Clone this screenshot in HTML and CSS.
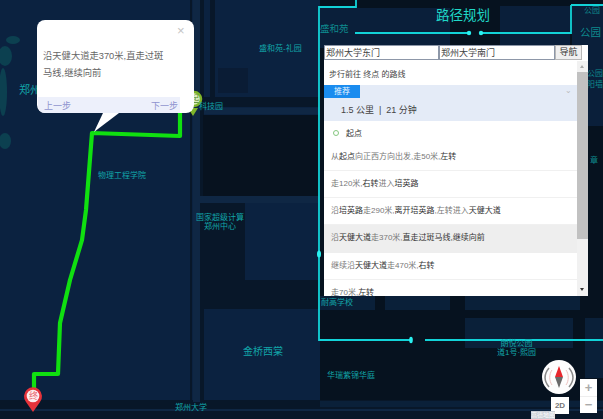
FILE: index.html
```html
<!DOCTYPE html>
<html lang="zh">
<head>
<meta charset="utf-8">
<title>路径规划</title>
<link rel="stylesheet" href="styles.css">
</head>
<body>
<main class="map">
  <svg class="map-art" width="603" height="419" viewBox="0 0 603 419" aria-hidden="true">
    <rect class="base" width="603" height="419"/>
    <g class="blob">
      <ellipse cx="13" cy="40" rx="7" ry="4"/>
      <ellipse cx="5" cy="56" rx="7" ry="10"/>
      <ellipse cx="3" cy="92" rx="4" ry="24"/>
      <ellipse cx="5" cy="141" rx="6" ry="8"/>
    </g>
    <g class="road-dark">
      <rect x="190" y="0" width="2" height="402"/>
      <rect x="200" y="0" width="4" height="402"/>
      <rect x="210" y="0" width="5" height="97"/>
      <rect x="204" y="97" width="116" height="10"/>
      <rect x="196" y="203" width="49" height="77"/>
      <rect x="200" y="280" width="120" height="29"/>
      <rect x="0" y="400" width="603" height="19"/>
    </g>
    <rect class="block-dark" x="203" y="115" width="117" height="81"/>
    <rect class="shadow" x="218" y="68" width="30" height="25"/>
    <g class="road-light">
      <rect x="193" y="0" width="7" height="402"/>
      <rect x="204" y="108" width="116" height="6"/>
      <rect x="196" y="196" width="124" height="7"/>
      <rect x="0" y="409" width="603" height="2"/>
    </g>
    <rect class="block-right" x="320" y="0" width="283" height="400"/>
    <rect class="block-top" x="320" y="8" width="130" height="40"/>
    <rect class="block-top" x="500" y="6" width="70" height="40"/>
    <rect class="block-top" x="572" y="6" width="31" height="120"/>
    <g class="block-navy">
      <rect x="320" y="296" width="55" height="14"/>
      <rect x="385" y="296" width="65" height="14"/>
      <rect x="465" y="296" width="115" height="14"/>
      <rect x="465" y="318" width="108" height="30"/>
      <rect x="585" y="318" width="18" height="60"/>
      <rect x="320" y="401" width="283" height="6"/>
    </g>
    <g class="frame">
      <path d="M571 5V33H481M468 33H355M356 0V7H319V340H411M425 340H603M571 5H603"/>
    </g>
    <g class="frame-dot">
      <circle cx="469" cy="33" r="2.200"/>
      <circle cx="481" cy="33" r="2.200"/>
      <ellipse cx="411" cy="340" rx="1.800" ry="3.200"/>
      <ellipse cx="319" cy="254" rx="2" ry="3.500"/>
    </g>
    <path class="route" d="M180 113V136L92 133L86 210L82 240L70 280L60 323L58 374H34V392"/>
    <g>
      <path class="start-tip" d="M188 108L193 116L198 108Z"/>
      <circle class="start-ring" cx="194" cy="99" r="7"/>
      <path class="end-pin" d="M33 412L26 402A9 9 0 1 1 40 402Z"/>
      <circle class="end-face" cx="33" cy="396" r="6.300"/>
    </g>
  </svg>

  <span class="label label-zz">郑州</span>
  <span class="label label-shl">盛和苑-礼园</span>
  <span class="label label-kj">科技园</span>
  <span class="label label-wl">物理工程学院</span>
  <span class="label label-gj">国家超级计算<br>郑州中心</span>
  <span class="label label-jq">金桥西棠</span>
  <span class="label label-zd">郑州大学</span>
  <span class="label label-sh">盛和苑</span>
  <span class="label label-gy1">公园</span>
  <span class="label label-gy2">公园</span>
  <span class="label label-gy3">公园<br>阳墙</span>
  <span class="label label-z">章</span>
  <span class="label label-nx">耐高学校</span>
  <span class="label label-ly">朗悦公园<br>道1号·熙园</span>
  <span class="label label-hr">华瑞紫锦华庭</span>
  <span class="start-char">起</span>
  <span class="end-char">终</span>
  <h1 class="title">路径规划</h1>

  <section class="popup">
    <span class="popup-close">×</span>
    <p class="popup-text">沿天健大道走370米,直走过斑马线,继续向前</p>
    <div class="popup-foot"><span>上一步</span><span>下一步</span></div>
    <svg class="popup-tail" width="30" height="20" viewBox="0 0 30 20" aria-hidden="true"><path d="M11 0L2 19L27 0Z"/></svg>
  </section>

  <section class="panel">
    <form class="search">
      <input class="search-input" value="郑州大学东门">
      <input class="search-input" value="郑州大学南门">
      <button class="search-btn" type="button">导航</button>
    </form>
    <div class="results">
      <div class="list">
        <p class="list-head">步行前往 终点 的路线</p>
        <div class="plan">
          <span class="badge">推荐</span>
          <span class="plan-caret">⌄</span>
          <p class="plan-info">1.5 公里 &nbsp;|&nbsp; 21 分钟</p>
        </div>
        <p class="origin"><i class="origin-dot"></i><b>起点</b></p>
        <p class="step">从<b>起点</b>向正西方向出发,走50米,<b>左转</b></p>
        <p class="step">走120米,<b>右转</b>进入<b>培英路</b></p>
        <p class="step">沿<b>培英路</b>走290米,<b>离开培英路</b>,左转进入<b>天健大道</b></p>
        <p class="step step-on">沿<b>天健大道</b>走370米,<b>直走过斑马线,继续向前</b></p>
        <p class="step">继续沿<b>天健大道</b>走470米,<b>右转</b></p>
        <p class="step step-last">走70米,<b>左转</b></p>
      </div>
      <div class="scrollbar">
        <span class="arrow-up"></span>
        <span class="thumb"></span>
        <span class="arrow-down"></span>
      </div>
    </div>
  </section>

  <div class="compass">
    <svg width="34" height="34" viewBox="0 0 34 34" aria-hidden="true">
      <circle class="compass-face" cx="17" cy="17" r="17"/>
      <path class="compass-arc" d="M7 8C2 14 2 21 7 27M27 8C32 14 32 21 27 27"/>
      <path class="compass-arc-red" d="M10 10C7 14 7 21 10 25M24 10C27 14 27 21 24 25"/>
      <path class="compass-n" d="M17 6L13 17H21Z"/>
      <path class="compass-s" d="M17 28L13 17H21Z"/>
    </svg>
  </div>
  <span class="mode">2D</span>
  <div class="zoom"><span>+</span><span>−</span></div>
  <span class="logo">高德地图</span>
</main>
</body>
</html>
```
FILE: styles.css
```css
* { box-sizing: border-box; }
html, body { margin: 0; padding: 0; }
body { width: 603px; height: 419px; overflow: hidden; background: #0b2240; font-family: "Liberation Sans", "Noto Sans CJK SC", sans-serif; }
p, h1 { margin: 0; font-weight: normal; }

.map { position: relative; width: 603px; height: 419px; overflow: hidden; }
.map-art { position: absolute; left: 0; top: 0; display: block; filter: blur(.5px); }
.base { fill: #0b2240; }
.blob { fill: #0c4050; }
.road-dark { fill: #081729; }
.road-light { fill: #0f2744; }
.block-dark { fill: #07121f; }
.shadow { fill: #0a1c35; }
.block-right { fill: #06121f; }
.block-top { fill: #0a1f3a; }
.block-navy { fill: #0a2039; }
.frame path { fill: none; stroke: #12d3d8; stroke-width: 1.800; }
.frame-dot { fill: #2af0f0; }
.route { fill: none; stroke: #10e010; stroke-width: 4.200; stroke-linejoin: round; }
.start-ring { fill: #dcebbd; stroke: #7fb52a; stroke-width: 2.500; }
.start-tip { fill: #7fb52a; }
.start-char { position: absolute; left: 190px; top: 94px; font-size: 9px; line-height: 10px; color: #4e8a2a; }
.end-pin { fill: #e6333a; }
.end-face { fill: #fdeeee; }
.end-char { position: absolute; left: 29px; top: 391px; font-size: 9px; line-height: 10px; color: #e8606a; }

.label { position: absolute; font-size: 8px; line-height: 9px; color: #12a5a8; white-space: nowrap; text-align: center; }
.label-zz { left: 19px; top: 84px; font-size: 11px; line-height: 12px; }
.label-shl { left: 259px; top: 44px; }
.label-kj { left: 199px; top: 102px; }
.label-wl { left: 98px; top: 171px; }
.label-gj { left: 196px; top: 213px; }
.label-jq { left: 243px; top: 346px; font-size: 10px; line-height: 12px; }
.label-zd { left: 175px; top: 403px; }
.label-sh { left: 320px; top: 23px; font-size: 9.500px; line-height: 11px; color: #0e8a8e; }
.label-gy1 { left: 584px; top: 6px; color: #0e8a8e; }
.label-gy2 { left: 580px; top: 26px; font-size: 10.500px; line-height: 12px; color: #0e8a8e; }
.label-gy3 { left: 587px; top: 68px; line-height: 11px; color: #0e8a8e; }
.label-z { left: 590px; top: 156px; color: #0e8a8e; }
.label-nx { left: 321px; top: 298px; }
.label-ly { left: 497px; top: 339px; }
.label-hr { left: 327px; top: 371px; }

.title { position: absolute; left: 436px; top: 7px; font-size: 13.500px; line-height: 17px; color: #1fd8c8; white-space: nowrap; }

.popup { position: absolute; left: 37px; top: 20px; width: 157px; height: 93px; background: #fff; border-radius: 8px; }
.popup-close { position: absolute; left: 140px; top: 4px; font-size: 13px; line-height: 14px; color: #c4c4c4; }
.popup-text { position: absolute; left: 6px; top: 28px; width: 122px; font-size: 9.300px; line-height: 17px; color: #666; }
.popup-foot { position: absolute; left: 1px; right: 14px; bottom: 0; height: 16px; padding: 0 2px 0 6px; display: flex; justify-content: space-between; align-items: center; background: #edf0fb; border-radius: 0 0 0 7px; font-size: 9px; color: #8f93cf; }
.popup-tail { position: absolute; left: 55px; top: 93px; display: block; }
.popup-tail path { fill: #fff; }

.panel { position: absolute; left: 324px; top: 45px; width: 264px; display: flex; flex-direction: column; }
.search { display: flex; height: 16px; margin: 0; background: #fff; }
.search-input { width: 115px; height: 15px; padding: 0 1px; border: 1px solid #8d97a8; border-radius: 0; background: #fff; font: 9px/13px "Liberation Sans", "Noto Sans CJK SC", sans-serif; color: #444; }
.search-input + .search-input { width: 116px; }
.search-btn { width: 27px; height: 15px; padding: 0; border: 1px solid #b8b8b8; background: #efefef; font: 9px/13px "Liberation Sans", "Noto Sans CJK SC", sans-serif; color: #333; }
.results { display: flex; height: 235px; background: #fff; overflow: hidden; }
.list { flex: 1; min-width: 0; font-size: 8px; color: #777; }
.list b { font-weight: normal; color: #333; }
.list-head { height: 24px; padding: 9px 0 0 5px; line-height: 10px; color: #444; }
.plan { position: relative; height: 36px; background: #e4ebf7; }
.badge { display: block; width: 36px; height: 13px; background: #1a8cef; color: #e8f4ff; line-height: 13px; text-align: center; }
.plan-caret { position: absolute; right: 5px; top: 0; font-size: 8px; line-height: 12px; color: #bbb; }
.plan-info { padding: 6px 0 0 17px; font-size: 9px; line-height: 12px; color: #444; }
.origin { height: 23px; display: flex; align-items: center; padding-left: 9px; }
.origin-dot { width: 6px; height: 6px; margin-right: 7px; border: 1.500px solid #85c77f; border-radius: 50%; }
.step { height: 27px; padding-left: 7px; line-height: 26px; border-bottom: 1px solid #f0f0f0; white-space: nowrap; }
.step-on { height: 28px; background: #eee; border-bottom: 0; }
.step-last { border-bottom: 0; }
.scrollbar { position: relative; width: 11px; background: #f1f1f1; display: flex; flex-direction: column; }
.thumb { display: block; height: 167px; margin-top: 11px; background: #c1c1c1; }
.arrow-up, .arrow-down { position: absolute; left: 3px; width: 0; height: 0; border-left: 2.500px solid transparent; border-right: 2.500px solid transparent; }
.arrow-up { top: 4px; border-bottom: 3px solid #aaa; }
.arrow-down { bottom: 5px; border-top: 3px solid #333; }

.compass { position: absolute; left: 542px; top: 360px; width: 34px; height: 34px; }
.compass svg { display: block; }
.compass-face { fill: #fdfdfd; }
.compass-arc { fill: none; stroke: #8a8a8a; stroke-width: 1.500; }
.compass-arc-red { fill: none; stroke: #e9b2ae; stroke-width: .8; }
.compass-n { fill: #e8262c; }
.compass-s { fill: #6a6a6a; }
.mode { position: absolute; left: 551px; top: 397px; width: 18px; height: 17px; background: #fff; color: #777; font-size: 8px; font-weight: bold; line-height: 17px; text-align: center; }
.zoom { position: absolute; left: 580px; top: 379px; width: 17px; height: 34px; background: #fff; display: flex; flex-direction: column; color: #aaa; font-size: 13px; font-weight: bold; }
.zoom span { flex: 1; display: flex; align-items: center; justify-content: center; }
.zoom span + span { border-top: 1px solid #eee; }
.logo { position: absolute; left: 531px; top: 411px; width: 24px; height: 8px; background: #c9ced6; color: #fff; font-size: 6px; line-height: 8px; white-space: nowrap; }
```
